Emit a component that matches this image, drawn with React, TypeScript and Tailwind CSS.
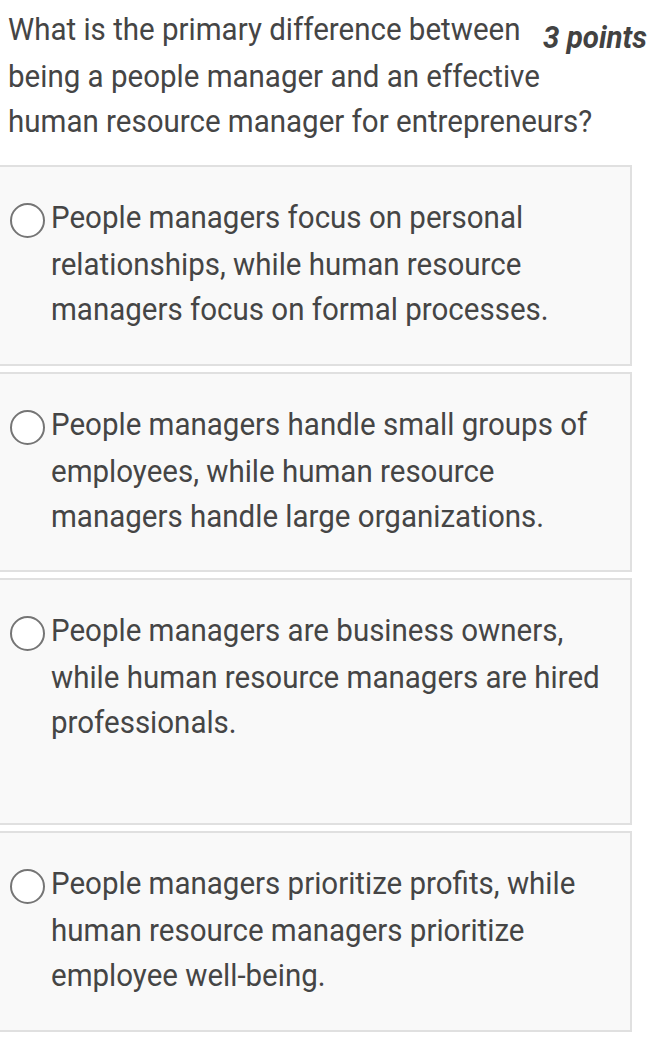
const options = [
  {
    text: "People managers focus on personal relationships, while human resource managers focus on formal processes.",
    extra: false,
  },
  {
    text: "People managers handle small groups of employees, while human resource managers handle large organizations.",
    extra: false,
  },
  {
    text: "People managers are business owners, while human resource managers are hired professionals.",
    extra: true,
  },
  {
    text: "People managers prioritize profits, while human resource managers prioritize employee well-being.",
    extra: false,
  },
];

export default function App() {
  return (
    <div
      className="min-h-[1060px] w-[647px] overflow-hidden bg-white text-[#454545]"
      style={{ fontFamily: "Roboto, 'Liberation Sans', sans-serif" }}
    >
      {/* Question — glyphs are slightly taller than wide in the original */}
      <div className="pl-[8px] pt-[7px]">
        <div className="w-[600px] origin-top scale-y-[1.08] text-[29.5px] leading-[42.6px]">
          <span className="float-right -mr-[39px] ml-[4px] mt-[14px] whitespace-nowrap text-[29.5px] font-bold italic leading-[28px] text-[#424242]">
            3 points
          </span>
          What is the primary difference between being a people manager and an effective human resource manager for entrepreneurs?
        </div>
      </div>

      {/* Options */}
      <ul className="mt-[30px] flex flex-col gap-[6px]">
        {options.map((o) => (
          <li
            key={o.text}
            className={
              "flex w-[632px] items-start border-2 border-l-0 border-[#e0e0e0] bg-[#f9f9f9] pl-[10px] pr-[19px] pt-[28px] " +
              (o.extra ? "pb-[87px]" : "pb-[41px]")
            }
          >
            <span className="mt-[8px] h-[35px] w-[35px] shrink-0 rounded-full border-2 border-[#757575] bg-white" />
            <div className="ml-[6px] origin-top scale-y-[1.08] text-[29.5px] leading-[42.6px]">
              {o.text}
            </div>
          </li>
        ))}
      </ul>
    </div>
  );
}
